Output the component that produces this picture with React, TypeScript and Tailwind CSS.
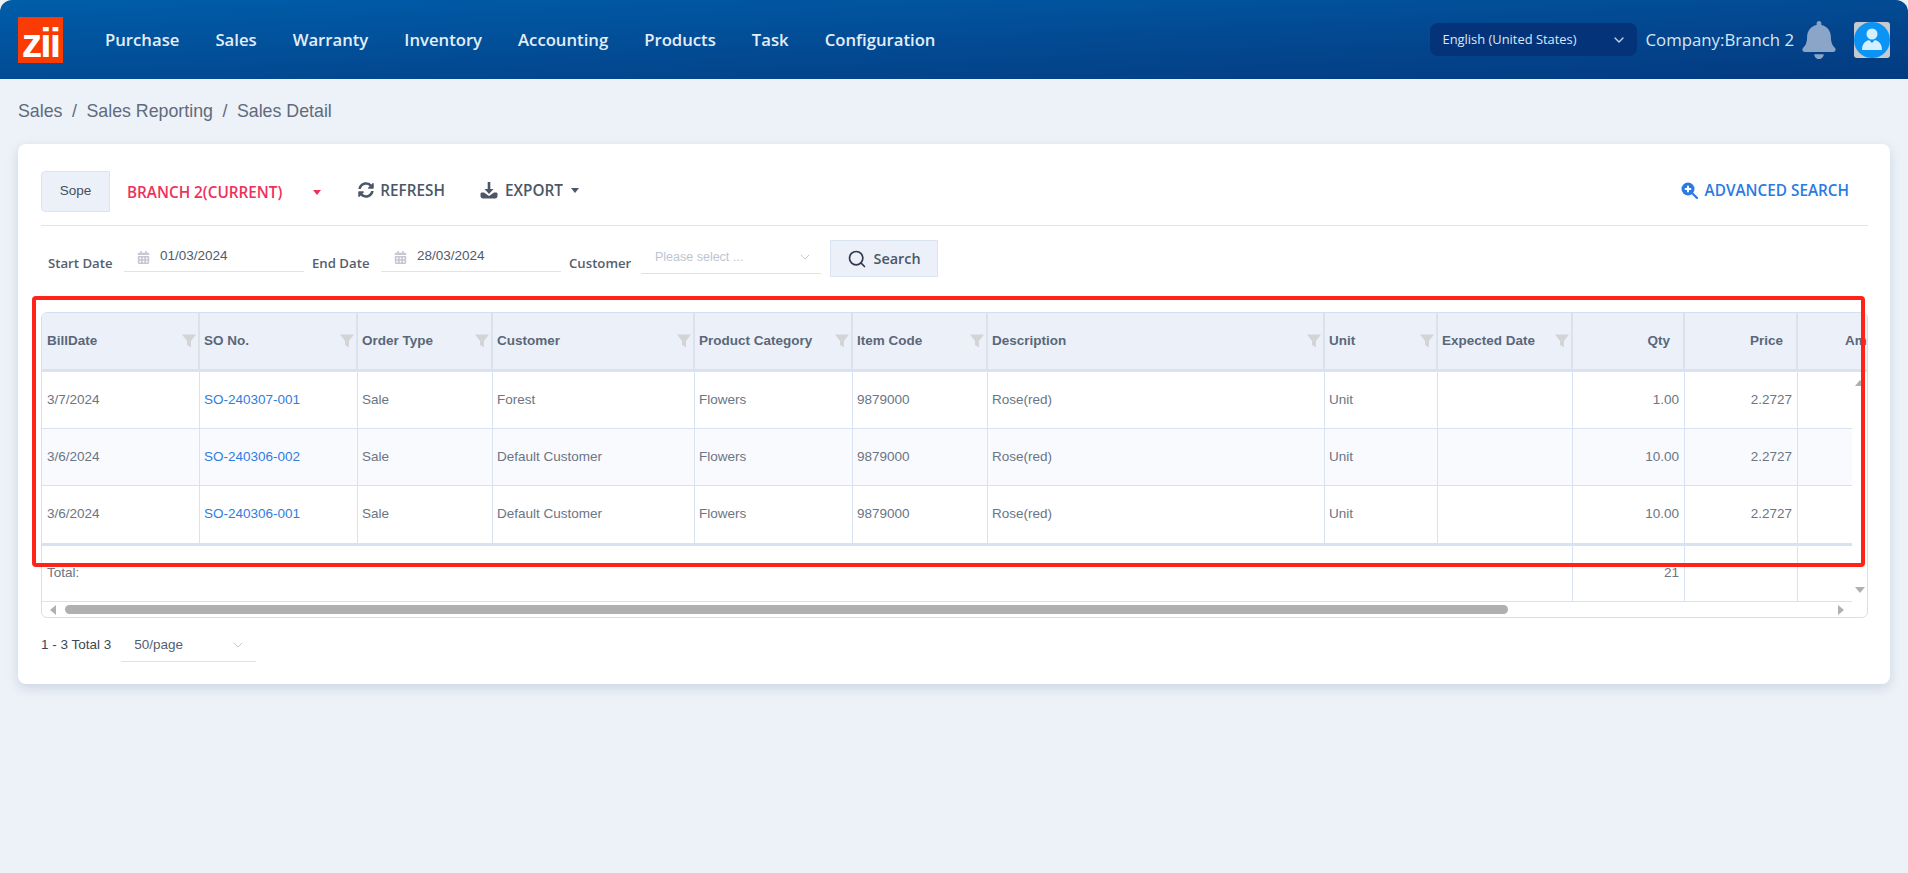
import React from "react";
import { ChevronDown, Search } from "lucide-react";
import { FaBell, FaCalendarAlt, FaSyncAlt } from "react-icons/fa";

const sans = "font-['Open_Sans','Noto_Sans',sans-serif]";
const arial = "font-['Liberation_Sans',Arial,sans-serif]";

const navItems = ["Purchase", "Sales", "Warranty", "Inventory", "Accounting", "Products", "Task", "Configuration"];

const colWidths = ["w-[158px]", "w-[158px]", "w-[135px]", "w-[202px]", "w-[158px]", "w-[135px]", "w-[337px]", "w-[113px]", "w-[135px]", "w-[112px]", "w-[113px]", "w-[113px]"];

const Cols = () => (
  <colgroup>
    {colWidths.map((w, i) => (
      <col key={i} className={w} />
    ))}
  </colgroup>
);

const headers: { label: string; filter: boolean }[] = [
  { label: "BillDate", filter: true },
  { label: "SO No.", filter: true },
  { label: "Order Type", filter: true },
  { label: "Customer", filter: true },
  { label: "Product Category", filter: true },
  { label: "Item Code", filter: true },
  { label: "Description", filter: true },
  { label: "Unit", filter: true },
  { label: "Expected Date", filter: true },
  { label: "Qty", filter: false },
  { label: "Price", filter: false },
  { label: "Amount", filter: false },
];

const rows = [
  { date: "3/7/2024", so: "SO-240307-001", customer: "Forest", qty: "1.00" },
  { date: "3/6/2024", so: "SO-240306-002", customer: "Default Customer", qty: "10.00" },
  { date: "3/6/2024", so: "SO-240306-001", customer: "Default Customer", qty: "10.00" },
];

const Funnel = () => (
  <svg width="14" height="14" viewBox="0 0 14 14" className="shrink-0">
    <path d="M0 0.5h14L9 7v6.500L5 11V7z" fill="#d3d4d5" />
  </svg>
);

const Caret = ({ color }: { color: string }) => (
  <svg width="8" height="5" viewBox="0 0 8 5" className="shrink-0">
    <path d="M0 0h8L4 5z" fill={color} />
  </svg>
);

const Arrow = ({ d }: { d: string }) => (
  <svg width="10" height="10" viewBox="0 0 10 10" className="shrink-0">
    <path d={d} fill="#b0b0b0" />
  </svg>
);

const DateField = ({ value }: { value: string }) => (
  <div className="flex h-[32px] w-[180px] items-start gap-[10px] border-b border-[#dbe3ee] pl-[13px] pt-[7px]">
    <FaCalendarAlt className="mt-[4px] shrink-0 text-[13px] text-[#c5c8d2]" />
    <span className={`${arial} text-[13.5px] leading-[18px] text-[#4f5b6d]`}>{value}</span>
  </div>
);

const FieldLabel = ({ text, width }: { text: string; width: string }) => (
  <span className={`${sans} ${width} mt-[13px] text-[13.2px] font-semibold leading-[20px] text-[#55606f]`}>{text}</span>
);

export default function App() {
  return (
    <div className="min-h-screen overflow-hidden bg-[#edf2f8]">
      <header className="flex h-[79px] items-center rounded-t-[12px] bg-gradient-to-br from-[#005da9] to-[#043a80] pl-[18px] pr-[18px]">
        <div className="flex h-[46px] w-[45px] shrink-0 items-center justify-center bg-[#fb3b04] pt-[8px]">
          <span className="font-['Liberation_Sans',sans-serif] text-[41px] font-bold leading-none tracking-[-2px] text-white">zii</span>
        </div>
        <nav className={`${sans} ml-[42px] flex gap-[36px] text-[16.7px] font-semibold text-[#e3eef9]`}>
          {navItems.map((n) => (
            <span key={n}>{n}</span>
          ))}
        </nav>
        <div className="ml-auto flex items-center">
          <div className={`${sans} flex h-[33px] w-[207px] items-center justify-between rounded-[8px] bg-[#05337a] pl-[13px] pr-[10px] text-[12.9px] text-[#dbe8f6]`}>
            <span>English (United States)</span>
            <ChevronDown size={16} strokeWidth={2} className="text-[#c7d5e8]" />
          </div>
          <span className={`${sans} ml-[9px] text-[16.8px] text-[#d5e6f7]`}>Company:Branch 2</span>
          <FaBell className="ml-[6px] text-[38px] text-[#8ba5c8]" />
          <svg width="36" height="36" viewBox="0 0 36 36" className="ml-[16px]">
            <rect width="36" height="36" rx="3" fill="#c7c9cd" />
            <circle cx="18" cy="18" r="18" fill="#0b93f6" />
            <circle cx="18" cy="12" r="5.500" fill="#d2f0ff" />
            <path d="M8 28c0-6 3-9 7-10l3 3 3-3c4 1 7 4 7 10z" fill="#d2f0ff" />
          </svg>
        </div>
      </header>

      <div className={`${arial} flex h-[63px] items-center gap-[9.5px] pl-[18px] pt-[1px] text-[17.8px] text-[#5f6b7c]`}>
        <span>Sales</span>
        <span>/</span>
        <span>Sales Reporting</span>
        <span>/</span>
        <span>Sales Detail</span>
      </div>

      <main className="ml-[18px] mt-[2px] h-[540px] w-[1872px] rounded-[8px] bg-white px-[23px] pt-[27px] shadow-[0_4px_12px_rgba(90,110,150,0.22)]">
        <div className="flex h-[55px] w-[1827px] items-start border-b border-[#dfe4ee] pb-[13px]">
          <div className={`${arial} flex h-[41px] w-[69px] items-center justify-center rounded-l-[4px] border border-[#dbe5f1] bg-[#ecf1f9] text-[13.5px] text-[#444f5f]`}>Sope</div>
          <div className={`${sans} ml-[17px] flex h-[41px] items-center pt-[1px] text-[15.3px] font-semibold text-[#f0305a]`}>
            <span>BRANCH 2(CURRENT)</span>
            <span className="ml-[31px]"><Caret color="#f0305a" /></span>
          </div>
          <div className={`${sans} ml-[37px] flex h-[38px] items-center text-[15.3px] font-semibold text-[#4b5767]`}>
            <FaSyncAlt className="text-[16px]" />
            <span className="ml-[6px]">REFRESH</span>
            <svg width="18" height="18" viewBox="0 0 18 18" className="ml-[35px]">
              <path d="M7.700 1h2.600v7h3.200L9 13 4.500 8h3.200z" fill="#4b5767" />
              <path d="M0.500 13c0-1 .6-1.500 1.500-1.500h2L9 15l5-3.500h2c.9 0 1.500.5 1.500 1.500v2c0 1.500-1 2.500-2.500 2.500H3C1.500 17.500.5 16.500.5 15z" fill="#4b5767" />
            </svg>
            <span className="ml-[7px]">EXPORT</span>
            <span className="ml-[8px]"><Caret color="#4b5767" /></span>
          </div>
          <div className={`${sans} ml-auto mr-[19px] flex h-[38px] items-center text-[15.3px] font-semibold text-[#2a7ae2]`}>
            <svg width="17" height="17" viewBox="0 0 17 17">
              <circle cx="7" cy="7" r="6.500" fill="#2a7ae2" />
              <path d="M7 3.800v6.400M3.800 7h6.400" stroke="#ffffff" strokeWidth="2" />
              <path d="M11.500 11.500l4.500 4.500" stroke="#2a7ae2" strokeWidth="2.200" strokeLinecap="round" />
            </svg>
            <span className="ml-[7px]">ADVANCED SEARCH</span>
          </div>
        </div>

        <div className="mt-[14px] flex h-[37px] items-start">
          <span className="w-[7px]" />
          <FieldLabel text="Start Date" width="w-[76px]" />
          <DateField value="01/03/2024" />
          <span className="w-[8px]" />
          <FieldLabel text="End Date" width="w-[69px]" />
          <DateField value="28/03/2024" />
          <span className="w-[8px]" />
          <FieldLabel text="Customer" width="w-[72px]" />
          <div className={`${arial} flex h-[34px] w-[180px] items-center justify-between border-b border-[#dbe3ee] pl-[14px] pr-[8px] pt-[1px] text-[12.5px] text-[#bcc5d2]`}>
            <span>Please select ...</span>
            <ChevronDown size={16} strokeWidth={1.5} className="text-[#c3c9d3]" />
          </div>
          <div className={`${sans} ml-[9px] flex h-[37px] w-[108px] items-center justify-center gap-[6px] border border-[#dbe5f1] bg-[#ecf1f9] text-[14.4px] font-semibold text-[#4b5767]`}>
            <Search size={20} strokeWidth={2} className="text-[#2f3b4c]" />
            <span>Search</span>
          </div>
        </div>

        <div className={`${arial} relative mt-[35px] w-[1827px] text-[13.5px] text-[#6a7585]`}>
          <div className="h-[306px] overflow-hidden rounded-[6px] border border-[#d5e0ee]">
            <div className="overflow-hidden bg-[#ecf1f9]">
              <table className="w-[1869px] table-fixed border-separate border-spacing-0">
                <Cols />
                <thead>
                  <tr>
                    {headers.map((h, i) => (
                      <th key={h.label} className="h-[59px] overflow-hidden whitespace-nowrap border-b-[3px] border-r-2 border-[#dbe2ec] p-0 font-bold text-[#5a6779]">
                        {h.filter ? (
                          <div className={`flex items-center justify-between pr-[2px] ${i === 0 ? "pl-[5px]" : "pl-[4px]"}`}>
                            <span>{h.label}</span>
                            <Funnel />
                          </div>
                        ) : (
                          <div className="pr-[13px] text-right">{h.label}</div>
                        )}
                      </th>
                    ))}
                  </tr>
                </thead>
              </table>
            </div>
            <div className="flex">
              <div className="w-[1810px] overflow-hidden">
                <table className="w-[1869px] table-fixed border-separate border-spacing-0">
                  <Cols />
                  <tbody>
                    {rows.map((r, i) => {
                      const rowBg = i === 1 ? "bg-[#f9fafe]" : "bg-white";
                      const bottom = i === 2 ? "h-[60px] border-b-[3px]" : "h-[57px] border-b";
                      const base = `${rowBg} ${bottom} border-r border-[#d8e2f0] p-0 whitespace-nowrap overflow-hidden`;
                      const cell = `${base} pl-[4px]`;
                      return (
                        <tr key={r.so}>
                          <td className={`${base} pl-[5px]`}>{r.date}</td>
                          <td className={`${cell} text-[#2f7de1]`}>{r.so}</td>
                          <td className={cell}>Sale</td>
                          <td className={cell}>{r.customer}</td>
                          <td className={cell}>Flowers</td>
                          <td className={cell}>9879000</td>
                          <td className={cell}>Rose(red)</td>
                          <td className={cell}>Unit</td>
                          <td className={cell} />
                          <td className={`${base} pr-[5px] text-right`}>{r.qty}</td>
                          <td className={`${base} pr-[5px] text-right`}>2.2727</td>
                          <td className={cell} />
                        </tr>
                      );
                    })}
                    <tr>
                      <td colSpan={9} className="h-[56px] border-b border-r border-[#d8e2f0] p-0 pl-[5px]">Total:</td>
                      <td className="border-b border-r border-[#d8e2f0] p-0 pr-[5px] text-right">21</td>
                      <td className="border-b border-r border-[#d8e2f0] p-0" />
                      <td className="border-b border-r border-[#d8e2f0] p-0" />
                    </tr>
                  </tbody>
                </table>
                <div className="flex h-[15px] items-center pl-[6px] pr-[6px]">
                  <Arrow d="M8 0v10L2 5z" />
                  <div className="ml-[7px] h-[9px] w-[1443px] rounded-[5px] bg-[#b0b0b0]" />
                  <span className="ml-auto"><Arrow d="M2 0v10l6-5z" /></span>
                </div>
              </div>
              <div className="flex h-[230px] w-[15px] flex-col items-center justify-between pb-[7px] pt-[6px]">
                <Arrow d="M0 8h10L5 2z" />
                <Arrow d="M0 2h10L5 8z" />
              </div>
            </div>
          </div>
          <div className="pointer-events-none absolute left-[-9px] top-[-16px] h-[271px] w-[1833px] rounded-[4px] border-[4px] border-[#ff2318]" />
        </div>

        <div className="mt-[11px] flex items-start">
          <span className={`${arial} mt-[7px] text-[13.5px] leading-[18px] text-[#3d4654]`}>1 - 3 Total 3</span>
          <div className={`${arial} ml-[10px] flex h-[33px] w-[135px] items-center justify-between border-b border-[#dbe3ee] pl-[13px] pr-[10px] text-[13.5px] text-[#55606f]`}>
            <span>50/page</span>
            <ChevronDown size={16} strokeWidth={1.5} className="text-[#c3c9d3]" />
          </div>
        </div>
      </main>
    </div>
  );
}
